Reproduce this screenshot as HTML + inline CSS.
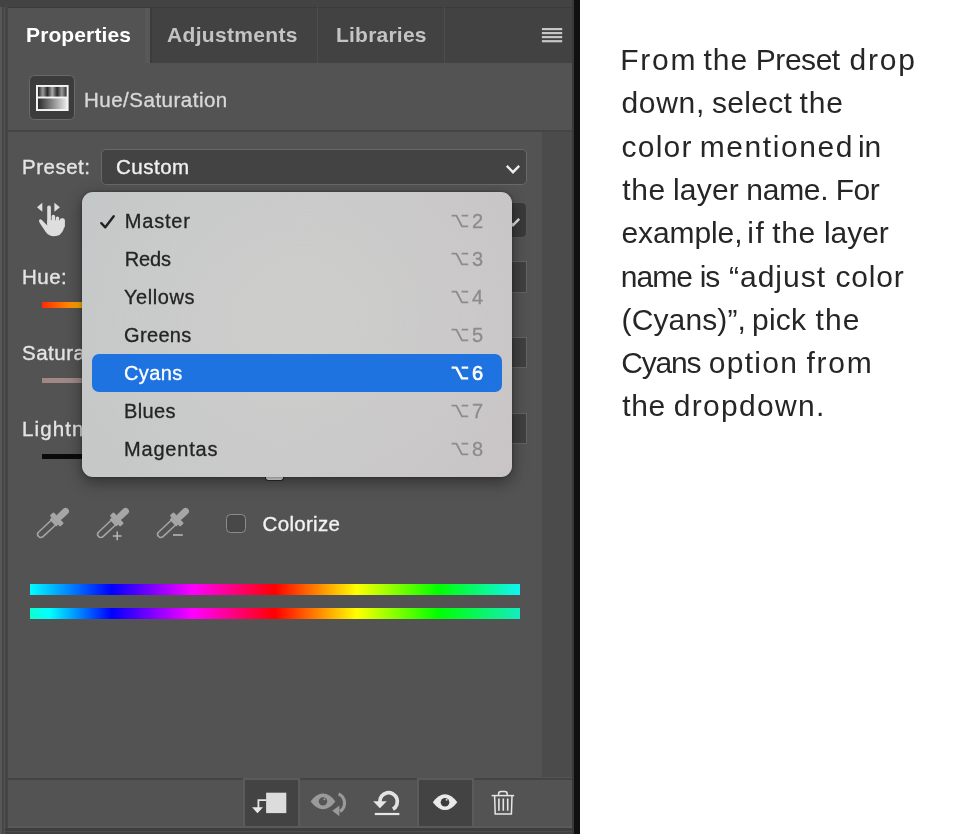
<!DOCTYPE html>
<html>
<head>
<meta charset="utf-8">
<title>Hue/Saturation Properties</title>
<style>
*{box-sizing:border-box;margin:0;padding:0}
html,body{width:960px;height:834px;overflow:hidden;background:#fff}
body{font-family:"Liberation Sans",sans-serif;position:relative;-webkit-font-smoothing:antialiased}
.abs{position:absolute}
.t{position:absolute;white-space:nowrap;line-height:1}
#ps{position:absolute;left:0;top:0;width:580px;height:834px;background:#535353;overflow:hidden}
.tab{position:absolute;top:7px;height:56px;background:#424242}
.tabt{position:absolute;white-space:nowrap;line-height:1;font-weight:bold;font-size:21px;letter-spacing:.22px;color:#c4c4c4}
.lbl{position:absolute;white-space:nowrap;line-height:1;font-size:20.5px;letter-spacing:.5px;color:#e4e4e4;-webkit-text-stroke:.35px currentColor}
.field{position:absolute;background:#434343;border:1.5px solid #696969;border-radius:5px}
#menu{position:absolute;left:82px;top:191.8px;width:430px;height:285.7px;border-radius:11px;background:radial-gradient(ellipse 60% 70% at 52% 45%,rgba(206,206,205,.9) 0,rgba(206,206,205,0) 100%),linear-gradient(100deg,#c5c8c8 0,#c9c9c9 50%,#c9c5c6 100%);box-shadow:0 5px 16px rgba(0,0,0,.42),0 0 3px rgba(0,0,0,.3)}
.mi{position:absolute;white-space:nowrap;line-height:1;font-size:20px;color:#242424;left:42px;-webkit-text-stroke:.3px currentColor}
.sc{position:absolute;white-space:nowrap;line-height:1;font-size:20px;color:#8a8a8a;left:390px;-webkit-text-stroke:.3px currentColor}
#note{position:absolute;left:0;top:38px;font-size:30px;line-height:43.3px;color:#262626;white-space:nowrap}
.nl{position:absolute;left:0;white-space:nowrap}
.nl span{position:absolute;top:0;white-space:nowrap}
#ps,#note{will-change:transform}
</style>
</head>
<body>
<div id="ps">
  <!-- top strip -->
  <div class="abs" style="left:0;top:0;width:580px;height:7px;background:#434343"></div>
  <div class="abs" style="left:8px;top:6.8px;width:564px;height:1.5px;background:#3b3b3b"></div>
  <!-- left edge lines -->
  <div class="abs" style="left:0;top:7px;width:2px;height:827px;background:#575757"></div>
  <div class="abs" style="left:2px;top:7px;width:2px;height:827px;background:#474747"></div>
  <div class="abs" style="left:5px;top:4px;width:3px;height:830px;background:#454545"></div>

  <!-- tab bar -->
  <div class="tab" style="left:151.6px;width:420.4px;top:8.2px;height:55.1px"></div>
  <div class="abs" style="left:145.4px;top:8.2px;width:4.4px;height:55.1px;background:#585858"></div>
  <div class="abs" style="left:149.7px;top:8.2px;width:2px;height:55.1px;background:#3c3c3c"></div>
  <div class="abs" style="left:317px;top:7px;width:1px;height:56px;background:#4d4d4d"></div>
  <div class="abs" style="left:444px;top:7px;width:1px;height:56px;background:#4d4d4d"></div>
  <div class="tabt" style="left:26px;top:23.5px;color:#fff;letter-spacing:.12px">Properties</div>
  <div class="tabt" style="left:167px;top:23.5px;letter-spacing:.33px">Adjustments</div>
  <div class="tabt" style="left:336px;top:23.5px">Libraries</div>
  <!-- hamburger -->
  <svg class="abs" style="left:541px;top:27px" width="23" height="17" viewBox="0 0 23 17">
    <g fill="#c6c6c6"><rect x="0.9" y="1" width="20.3" height="2.2"/><rect x="0.9" y="5" width="20.3" height="2.2"/><rect x="0.9" y="9" width="20.3" height="2.2"/><rect x="0.9" y="13.1" width="20.3" height="2.2"/></g>
  </svg>

  <!-- header icon -->
  <div class="abs" style="left:29.2px;top:74.8px;width:45.4px;height:45.4px;background:#3c3c3c;border:1.5px solid #6a6a6a;border-radius:5.5px"></div>
  <svg class="abs" style="left:36px;top:85.1px" width="32.6" height="26" viewBox="0 0 33 27" preserveAspectRatio="none">
    <defs>
      <linearGradient id="g1" x1="0" x2="1" y1="0" y2="0">
        <stop offset="0" stop-color="#222"/><stop offset=".17" stop-color="#999"/><stop offset=".33" stop-color="#2a2a2a"/><stop offset=".5" stop-color="#aaa"/><stop offset=".67" stop-color="#2a2a2a"/><stop offset=".83" stop-color="#999"/><stop offset="1" stop-color="#333"/>
      </linearGradient>
      <linearGradient id="g2" x1="0" x2="1" y1="0" y2="0">
        <stop offset="0" stop-color="#2a2a2a"/><stop offset="1" stop-color="#e8e8e8"/>
      </linearGradient>
    </defs>
    <rect x="0" y="0" width="33" height="27" fill="#f4f4f4"/>
    <rect x="2" y="2" width="29" height="10" fill="url(#g1)"/>
    <rect x="2" y="14" width="29" height="11" fill="url(#g2)"/>
  </svg>
  <div class="lbl" style="left:84px;top:90px;color:#d8d8d8">Hue/Saturation</div>

  <!-- separator -->
  <div class="abs" style="left:8px;top:130px;width:564px;height:2px;background:#454545"></div>
  <!-- scrollbar track -->
  <div class="abs" style="left:542px;top:132px;width:30px;height:645px;background:#4b4b4b"></div>

  <!-- Preset row -->
  <div class="lbl" style="left:22px;top:157px">Preset:</div>
  <div class="field" style="left:100.6px;top:148.7px;width:426.6px;height:36px"></div>
  <div class="lbl" style="left:116px;top:157px;color:#f0f0f0">Custom</div>
  <svg class="abs" style="left:505px;top:163.9px" width="16" height="11" viewBox="0 0 16 11"><path d="M1.8 1.9 L8 8.2 L14.2 1.9" fill="none" stroke="#ededed" stroke-width="2.4"/></svg>

  <!-- second dropdown (mostly hidden) -->
  <div class="field" style="left:100.6px;top:201.5px;width:426.6px;height:36.4px;background:#3a3a3a;border-color:#585858"></div>
  <svg class="abs" style="left:505px;top:217.2px" width="16" height="11" viewBox="0 0 16 11"><path d="M1.8 1.9 L8 8.2 L14.2 1.9" fill="none" stroke="#e4e4e4" stroke-width="2.4"/></svg>
  <!-- value fields -->
  <div class="field" style="left:440px;top:261px;width:87px;height:31.6px;border-radius:0;background:#404040;border-color:#626262"></div>
  <div class="field" style="left:440px;top:336.8px;width:87px;height:31.4px;border-radius:0;background:#404040;border-color:#626262"></div>
  <div class="field" style="left:440px;top:412.6px;width:87px;height:31.6px;border-radius:0;background:#404040;border-color:#626262"></div>

  <!-- labels -->
  <div class="lbl" style="left:22px;top:267px">Hue:</div>
  <div class="lbl" style="left:22px;top:343px">Saturation:</div>
  <div class="lbl" style="left:22px;top:419px;letter-spacing:1.1px">Lightness:</div>
  <!-- slider tracks -->
  <div class="abs" style="left:42px;top:302px;width:60px;height:6px;background:linear-gradient(90deg,#ff2a00 0,#ffb400 40px)"></div>
  <div class="abs" style="left:42px;top:378px;width:60px;height:5px;background:#a08888"></div>
  <div class="abs" style="left:42px;top:454px;width:60px;height:5px;background:#0a0a0a"></div>

  <!-- hand scrubby icon -->
  <svg class="abs" style="left:30px;top:196px" width="40" height="44" viewBox="30 196 40 44">
    <g fill="#dedede">
      <path d="M37 207.3 L42.3 202.8 V211.8 Z"/>
      <path d="M59.9 207.3 L54.4 202.8 V211.8 Z"/>
      <rect x="47.2" y="205.5" width="3.7" height="20" rx="1.8"/>
      <rect x="51.6" y="214.8" width="3.5" height="10" rx="1.7"/>
      <rect x="55.7" y="216.4" width="3.5" height="10" rx="1.7"/>
      <rect x="59.8" y="218.2" width="5" height="10" rx="2"/>
      <path d="M47.3 220 V225.6 L41.6 219.7 Q40 218.6 39.1 220 Q38.7 221.4 39.9 223.2 L45.4 231.6 Q48.6 236.3 54 236.3 Q61 236.3 63.5 229.5 Q64.8 225.6 64.8 221 V220.5 Z"/>
    </g>
  </svg>
  <!-- eyedroppers -->
  <svg class="abs" style="left:32.5px;top:502.4px" width="40" height="42" viewBox="-20 -21 40 42">
    <g transform="rotate(47)" fill="#a6a6a6" stroke="none">
      <rect x="-3.4" y="-20.6" width="6.8" height="15" rx="3.4"/>
      <rect x="-7.6" y="-7.8" width="15.2" height="5.2" rx="1"/>
      <rect x="-4.8" y="-3" width="9.6" height="3.2" rx=".8"/>
      <path d="M-3.2 -0.5 V16.6 A3.2 3.2 0 0 0 3.2 16.6 V-0.5" fill="none" stroke="#a6a6a6" stroke-width="1.5"/>
    </g>
    
  </svg>
  <svg class="abs" style="left:92.5px;top:502.4px" width="40" height="42" viewBox="-20 -21 40 42">
    <g transform="rotate(47)" fill="#a6a6a6" stroke="none">
      <rect x="-3.4" y="-20.6" width="6.8" height="15" rx="3.4"/>
      <rect x="-7.6" y="-7.8" width="15.2" height="5.2" rx="1"/>
      <rect x="-4.8" y="-3" width="9.6" height="3.2" rx=".8"/>
      <path d="M-3.2 -0.5 V16.6 A3.2 3.2 0 0 0 3.2 16.6 V-0.5" fill="none" stroke="#a6a6a6" stroke-width="1.5"/>
    </g>
    <path d="M-0.2 12.9 H8.6 M4.2 8.5 V17.3" fill="none" stroke="#b5b5b5" stroke-width="1.5"/>
  </svg>
  <svg class="abs" style="left:152.5px;top:502.4px" width="40" height="42" viewBox="-20 -21 40 42">
    <g transform="rotate(47)" fill="#a6a6a6" stroke="none">
      <rect x="-3.4" y="-20.6" width="6.8" height="15" rx="3.4"/>
      <rect x="-7.6" y="-7.8" width="15.2" height="5.2" rx="1"/>
      <rect x="-4.8" y="-3" width="9.6" height="3.2" rx=".8"/>
      <path d="M-3.2 -0.5 V16.6 A3.2 3.2 0 0 0 3.2 16.6 V-0.5" fill="none" stroke="#a6a6a6" stroke-width="1.5"/>
    </g>
    <path d="M0 12 H9.8" fill="none" stroke="#b5b5b5" stroke-width="1.6"/>
  </svg>
  <!-- colorize row -->
  <div class="abs" style="left:226px;top:514.3px;width:19.6px;height:19.2px;border:1.6px solid #8c8c8c;border-radius:4.5px;background:#484848"></div>
  <div class="lbl" style="left:262.6px;top:514px;color:#f2f2f2;letter-spacing:.3px">Colorize</div>

  <!-- rainbow bars -->
  <div class="abs" style="left:30px;top:584px;width:489.7px;height:10.5px;background:linear-gradient(90deg,#00ffff 0%,#0000ff 16.7%,#ff00ff 33.3%,#ff0000 50%,#ffff00 66.7%,#00ff00 83.3%,#10f4f4 100%)"></div>
  <div class="abs" style="left:30px;top:608px;width:489.7px;height:10.6px;background:linear-gradient(90deg,#10ffd0 0%,#00ffff 4%,#0000ff 16.7%,#ff00ff 33.3%,#ff0000 50%,#ffff00 66.7%,#00ff00 83.3%,#14ecc0 100%)"></div>

  <!-- bottom toolbar -->
  <div class="abs" style="left:8px;top:777.5px;width:564px;height:2px;background:#444"></div>
  <div class="abs" style="left:242.5px;top:777.5px;width:57.5px;height:51px;background:#434343;border-left:2px solid #5b5b5b;border-right:2px solid #5b5b5b;border-top:2px solid #5a5a5a"></div>
  <div class="abs" style="left:416.5px;top:777.5px;width:57.5px;height:51px;background:#434343;border-left:2px solid #5b5b5b;border-right:2px solid #5b5b5b;border-top:2px solid #5a5a5a"></div>
  <div class="abs" style="left:8px;top:825.6px;width:564px;height:2.6px;background:#5a5a5a"></div>
  <div class="abs" style="left:5px;top:828.1px;width:570px;height:3px;background:#3e3e3e"></div>
  <div class="abs" style="left:5px;top:831px;width:570px;height:1.2px;background:#4a4a4a"></div>
  <div class="abs" style="left:5px;top:832.2px;width:570px;height:2px;background:#404040"></div>
  <!-- clip to layer icon -->
  <svg class="abs" style="left:250px;top:790px" width="40" height="26" viewBox="250 790 40 26">
    <rect x="266.1" y="792.7" width="20.2" height="20.4" fill="#dcdcdc"/>
    <path d="M266.2 800.1 H258.4 V808" fill="none" stroke="#e4e4e4" stroke-width="1.8"/>
    <path d="M252 807.2 H263 L257.5 813.2 Z" fill="#e8e8e8"/>
  </svg>
  <!-- view previous state icon -->
  <svg class="abs" style="left:308px;top:788px" width="44" height="32" viewBox="308 788 44 32">
    <path d="M310.6 801.4 Q316.5 793.6 323 793.6 Q329.5 793.6 335.4 801.4 Q329.5 809.2 323 809.2 Q316.5 809.2 310.6 801.4 Z" fill="#9a9a9a"/>
    <circle cx="323" cy="801.4" r="4.2" fill="#555"/>
    <circle cx="324.4" cy="799.3" r="1" fill="#9a9a9a"/>
    <path d="M338.6 793.9 A10 10 0 0 1 340 811.4" fill="none" stroke="#9a9a9a" stroke-width="3.2"/>
    <path d="M332.3 810.8 L339.4 805.6 V816.2 Z" fill="#9a9a9a"/>
  </svg>
  <!-- reset icon -->
  <svg class="abs" style="left:368px;top:786px" width="36" height="32" viewBox="368 786 36 32">
    <path d="M379.8 802 A8.8 8.8 0 1 1 392.9 809.2" fill="none" stroke="#e2e2e2" stroke-width="3.7"/>
    <path d="M373.2 801.2 H386.8 L379.9 808.3 Z" fill="#e6e6e6"/>
    <rect x="374.8" y="812.9" width="24.6" height="2.2" fill="#e6e6e6"/>
  </svg>
  <!-- visibility eye -->
  <svg class="abs" style="left:430px;top:790px" width="30" height="24" viewBox="430 790 30 24">
    <path d="M432.8 802.2 Q438.8 794.3 445 794.3 Q451.2 794.3 457.3 802.2 Q451.2 810.1 445 810.1 Q438.8 810.1 432.8 802.2 Z" fill="#eaeaea"/>
    <circle cx="445" cy="802.2" r="4.3" fill="#3c3c3c"/>
    <circle cx="446.6" cy="799.8" r="1" fill="#cfcfcf"/>
  </svg>
  <!-- trash -->
  <svg class="abs" style="left:488px;top:788px" width="30" height="30" viewBox="488 788 30 30">
    <g fill="none" stroke="#e6e6e6" stroke-width="1.5">
      <path d="M491.6 795.6 H514.2"/>
      <path d="M498.6 795.4 V794 Q498.6 791.6 501 791.6 H504.8 Q507.2 791.6 507.2 794 V795.4"/>
      <path d="M494.6 796 L495.2 813.9 H511.4 L512 796"/>
      <path d="M498.9 798.4 V810.8 M503.3 798.4 V810.8 M507.7 798.4 V810.8" stroke-width="1.6"/>
    </g>
  </svg>

  <div class="abs" style="left:264.5px;top:474px;width:19px;height:6.6px;background:#f0f0f0;border:1px solid #2a2a2a;border-top:0;border-radius:0 0 3.5px 3.5px"></div>
  <!-- MENU -->
  <div id="menu">
    <div class="abs" style="left:9.6px;top:162.0px;width:410px;height:38.3px;border-radius:7px;background:#1f73e0"></div>
    <svg class="abs" style="left:17px;top:20.8px" width="17" height="17" viewBox="0 0 17 17"><path d="M2.3 10.2 L6.3 14.3 L14.7 3.2" fill="none" stroke="#222" stroke-width="2.4" stroke-linecap="round" stroke-linejoin="round"/></svg>
    <div class="mi" style="top:18.8px;left:42.8px;letter-spacing:0.8px;color:#242424">Master</div>
    <div class="abs" style="left:369px;top:21.8px;width:18px;height:14px"><svg width="18" height="14" viewBox="0 0 18 14" style="position:absolute;left:0;top:0"><path d="M0.6 1.6 H5.4 L11 12.4 H17.2 M10.6 1.6 H17.2" fill="none" stroke="#8c8c8c" stroke-width="1.9" stroke-linejoin="round"/></svg></div>
    <div class="sc" style="top:18.8px;color:#8c8c8c">2</div>
    <div class="mi" style="top:56.8px;left:42.8px;letter-spacing:-0.2px;color:#242424">Reds</div>
    <div class="abs" style="left:369px;top:59.8px;width:18px;height:14px"><svg width="18" height="14" viewBox="0 0 18 14" style="position:absolute;left:0;top:0"><path d="M0.6 1.6 H5.4 L11 12.4 H17.2 M10.6 1.6 H17.2" fill="none" stroke="#8c8c8c" stroke-width="1.9" stroke-linejoin="round"/></svg></div>
    <div class="sc" style="top:56.8px;color:#8c8c8c">3</div>
    <div class="mi" style="top:94.8px;letter-spacing:0.55px;color:#242424">Yellows</div>
    <div class="abs" style="left:369px;top:97.8px;width:18px;height:14px"><svg width="18" height="14" viewBox="0 0 18 14" style="position:absolute;left:0;top:0"><path d="M0.6 1.6 H5.4 L11 12.4 H17.2 M10.6 1.6 H17.2" fill="none" stroke="#8c8c8c" stroke-width="1.9" stroke-linejoin="round"/></svg></div>
    <div class="sc" style="top:94.8px;color:#8c8c8c">4</div>
    <div class="mi" style="top:132.8px;letter-spacing:0.35px;color:#242424">Greens</div>
    <div class="abs" style="left:369px;top:135.8px;width:18px;height:14px"><svg width="18" height="14" viewBox="0 0 18 14" style="position:absolute;left:0;top:0"><path d="M0.6 1.6 H5.4 L11 12.4 H17.2 M10.6 1.6 H17.2" fill="none" stroke="#8c8c8c" stroke-width="1.9" stroke-linejoin="round"/></svg></div>
    <div class="sc" style="top:132.8px;color:#8c8c8c">5</div>
    <div class="mi" style="top:170.8px;letter-spacing:0.4px;color:#fff">Cyans</div>
    <div class="abs" style="left:369px;top:173.8px;width:18px;height:14px"><svg width="18" height="14" viewBox="0 0 18 14" style="position:absolute;left:0;top:0"><path d="M0.6 1.6 H5.4 L11 12.4 H17.2 M10.6 1.6 H17.2" fill="none" stroke="#fff" stroke-width="2.4" stroke-linejoin="round"/></svg></div>
    <div class="sc" style="top:170.8px;color:#fff;-webkit-text-stroke:.7px #fff">6</div>
    <div class="mi" style="top:208.8px;letter-spacing:0.35px;color:#242424">Blues</div>
    <div class="abs" style="left:369px;top:211.8px;width:18px;height:14px"><svg width="18" height="14" viewBox="0 0 18 14" style="position:absolute;left:0;top:0"><path d="M0.6 1.6 H5.4 L11 12.4 H17.2 M10.6 1.6 H17.2" fill="none" stroke="#8c8c8c" stroke-width="1.9" stroke-linejoin="round"/></svg></div>
    <div class="sc" style="top:208.8px;color:#8c8c8c">7</div>
    <div class="mi" style="top:246.8px;letter-spacing:0.8px;color:#242424">Magentas</div>
    <div class="abs" style="left:369px;top:249.8px;width:18px;height:14px"><svg width="18" height="14" viewBox="0 0 18 14" style="position:absolute;left:0;top:0"><path d="M0.6 1.6 H5.4 L11 12.4 H17.2 M10.6 1.6 H17.2" fill="none" stroke="#8c8c8c" stroke-width="1.9" stroke-linejoin="round"/></svg></div>
    <div class="sc" style="top:246.8px;color:#8c8c8c">8</div>
  </div>

  <!-- right edge -->
  <div class="abs" style="left:572px;top:0;width:8px;height:834px;background:#393939"></div>
  <div class="abs" style="left:574.3px;top:0;width:5.7px;height:834px;background:#101010"></div>
</div>

<div id="note">
  <div class="nl" style="top:0.0px"><span style="left:620.2px;letter-spacing:1.8px">From</span> <span style="left:703.5px;letter-spacing:1.0px">the</span> <span style="left:755.8px;letter-spacing:-0.46px">Preset</span> <span style="left:849.45px;letter-spacing:1.8px">drop</span> </div>
  <div class="nl" style="top:43.3px"><span style="left:621.45px;letter-spacing:0.688px">down,</span> <span style="left:711.95px;letter-spacing:0.3px">select</span> <span style="left:799.5px;letter-spacing:0.85px">the</span> </div>
  <div class="nl" style="top:86.6px"><span style="left:621.45px;letter-spacing:1.262px">color</span> <span style="left:699.7px;letter-spacing:1.594px">mentioned</span> <span style="left:858.0px;letter-spacing:-0.2px">in</span> </div>
  <div class="nl" style="top:129.9px"><span style="left:622.2px;letter-spacing:0.65px">the</span> <span style="left:673.0px;letter-spacing:0.2px">layer</span> <span style="left:746.3px;letter-spacing:-0.262px">name.</span> <span style="left:835.8px;letter-spacing:-0.5px">For</span> </div>
  <div class="nl" style="top:173.2px"><span style="left:621.45px;letter-spacing:-0.1px">example,</span> <span style="left:747.3px;letter-spacing:1.45px">if</span> <span style="left:772.2px;letter-spacing:0.65px">the</span> <span style="left:824.0px;letter-spacing:-0.05px">layer</span> </div>
  <div class="nl" style="top:216.5px"><span style="left:620.7px;letter-spacing:-0.917px">name</span> <span style="left:699.7px;letter-spacing:-1.15px">is</span> <span style="left:729.0px;letter-spacing:1.0px">&ldquo;adjust</span> <span style="left:835.45px;letter-spacing:0.837px">color</span> </div>
  <div class="nl" style="top:259.8px"><span style="left:621.55px;letter-spacing:0.125px">(Cyans)&rdquo;,</span> <span style="left:752.0px;letter-spacing:0.25px">pick</span> <span style="left:815.5px;letter-spacing:1.15px">the</span> </div>
  <div class="nl" style="top:303.1px"><span style="left:621.2px;letter-spacing:-1.2px">Cyans</span> <span style="left:708.75px;letter-spacing:1.3px">option</span> <span style="left:806.45px;letter-spacing:1.8px">from</span> </div>
  <div class="nl" style="top:346.4px"><span style="left:622.2px;letter-spacing:0.65px">the</span> <span style="left:673.75px;letter-spacing:1.306px">dropdown.</span> </div>
</div>
</body>
</html>
